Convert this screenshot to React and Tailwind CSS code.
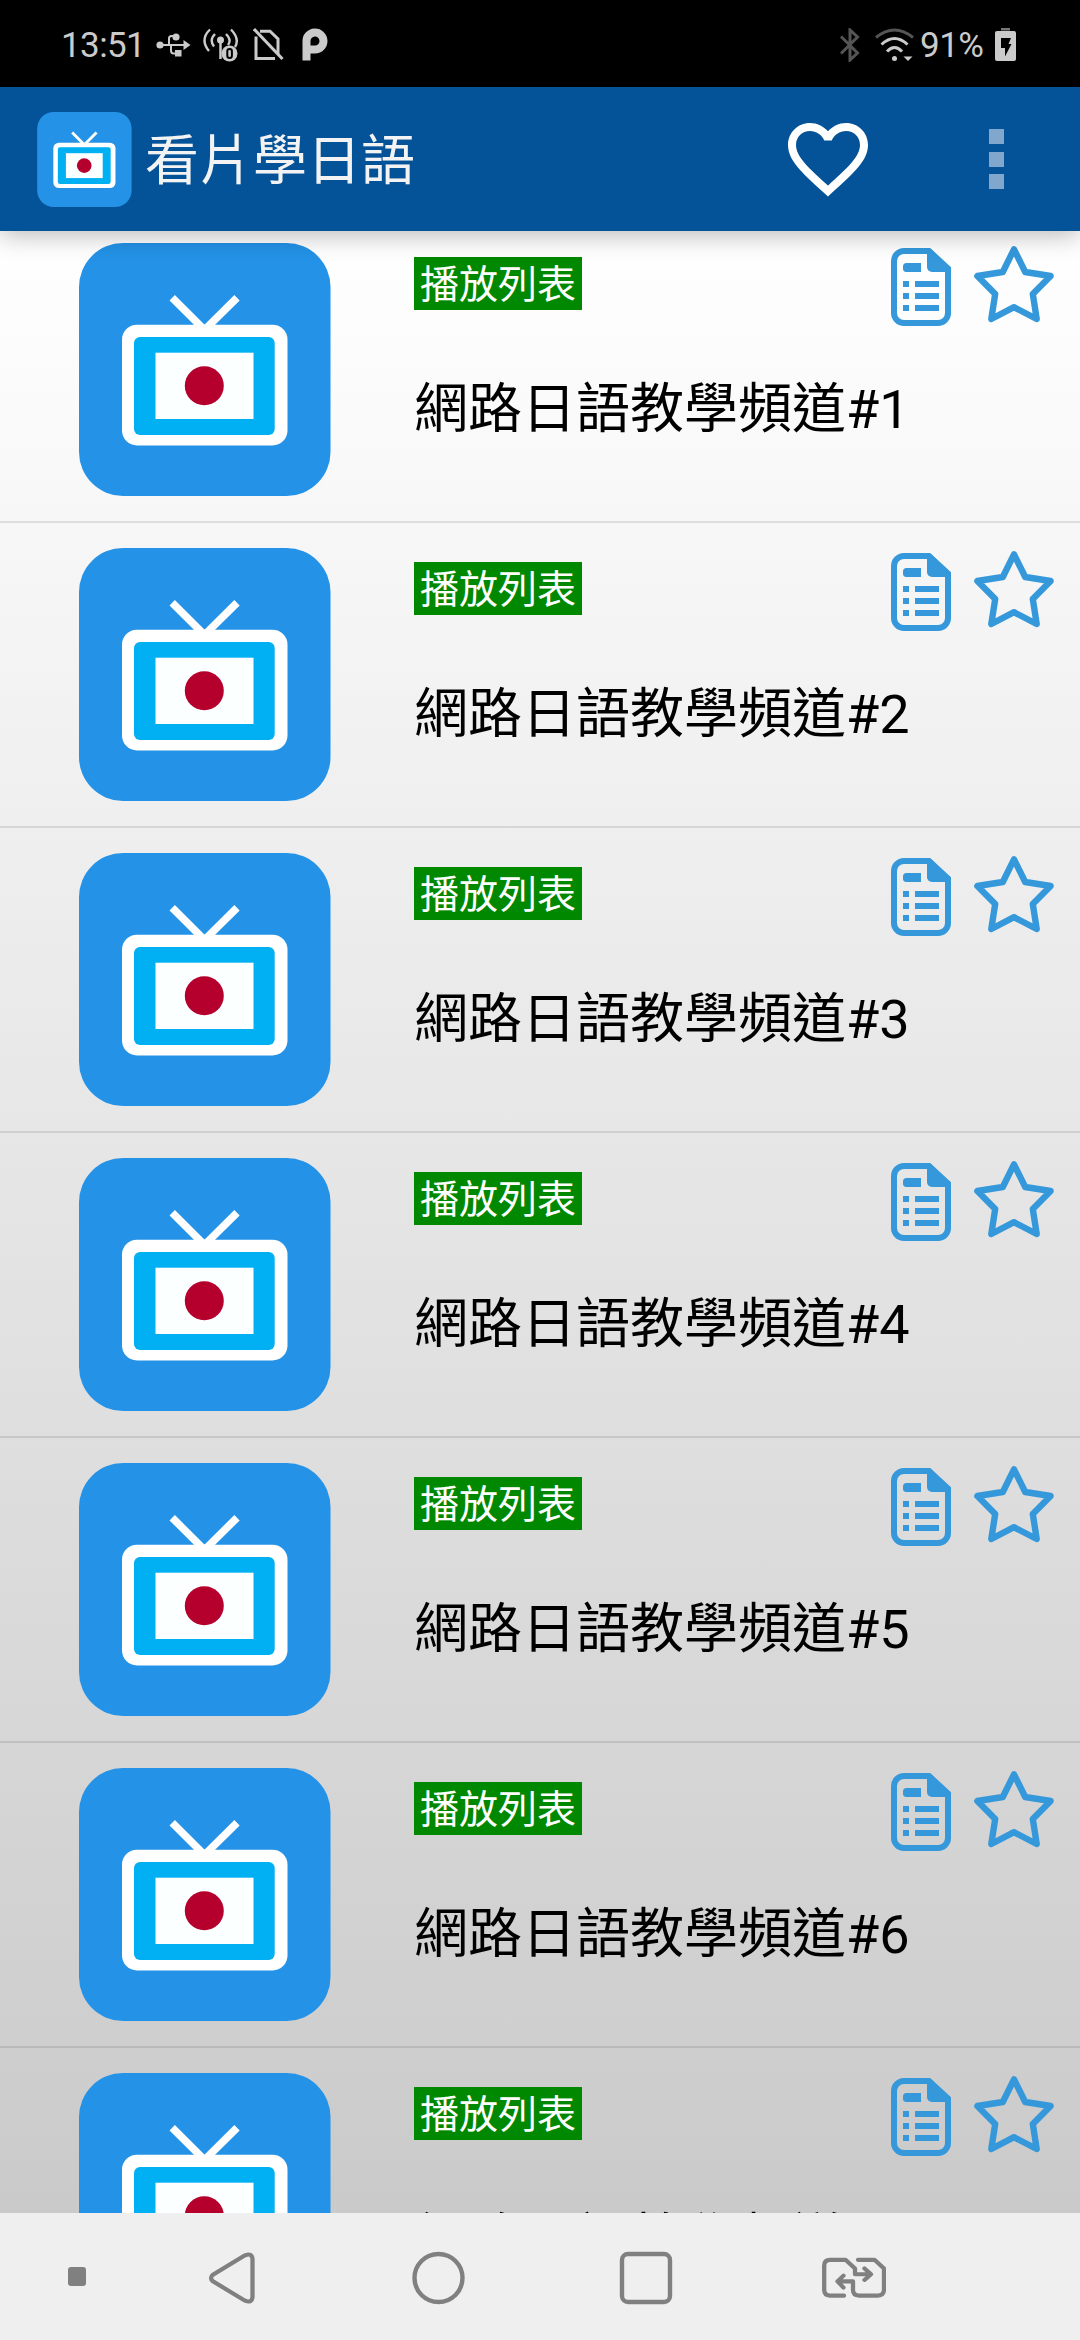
const channels = [1, 2, 3, 4, 5, 6, 7];

function TvLogo({ className }) {
  return (
    <svg viewBox="0 0 252 253" className={className} fill="none">
      <rect width="251.5" height="253" rx="44" fill="#2492e6" />
      <path d="M93.2 54.7 125.5 87 158 54.7" stroke="#fff" strokeWidth="7.6" />
      <rect x="43" y="81.7" width="165.5" height="120.8" rx="15" fill="#fff" />
      <rect x="55" y="94" width="140.7" height="98" rx="6" fill="#01b0f3" />
      <rect x="76.5" y="109.7" width="98" height="66.3" fill="#fbffff" />
      <circle cx="125.3" cy="142.7" r="19.5" fill="#b5002d" />
    </svg>
  );
}

function DocIcon() {
  return (
    <svg width="60" height="78" viewBox="0 0 60 78" fill="none">
      <path d="M38 3H13A10 10 0 0 0 3 13V65A10 10 0 0 0 13 75H47A10 10 0 0 0 57 65V20.500Z" stroke="#3498db" strokeWidth="6" />
      <path d="M36 1H40L59 19.500V24H41A5 5 0 0 1 36 19Z" fill="#3498db" />
      <path d="M15.500 15H30V24H15.500A3 3 0 0 1 12 21V18.500A3.500 3.500 0 0 1 15.500 15ZM12 33h6v6h-6zM24 33h24v6H24zM12 45h6v6h-6zM24 45h24v6H24zM12 57h6v6h-6zM24 57h24v6H24z" fill="#3498db" />
    </svg>
  );
}

function StarIcon() {
  return (
    <svg width="82" height="78" viewBox="0 0 82 78" fill="none">
      <path d="M41 4.300 52.200 27 77.600 31 59.800 49 63.700 74 41 62.200 18.300 74 22.200 49 4.400 31 29.800 27Z" stroke="#3498db" strokeWidth="6.400" strokeLinejoin="round" />
    </svg>
  );
}

function StatusBar() {
  return (
    <div className="flex h-[87px] shrink-0 items-center bg-black pl-[61px] pr-[64px] pt-[2px] text-[35px] leading-none text-[#cbcbcb]">
      <span className="w-[95px] pt-[2px] tracking-[-0.6px]">13:51</span>
      <svg width="35" height="34" viewBox="0 0 35 34" fill="none">
        <path d="M4 17H28M13 16V10.500Q13 8 15.500 8H19M15 18V22.500Q15 25.500 17.500 25.500H20" stroke="#cbcbcb" strokeWidth="2" />
        <circle cx="4" cy="17" r="3.600" fill="#cbcbcb" />
        <circle cx="20" cy="9" r="3.600" fill="#cbcbcb" />
        <path d="M27.500 12 34.500 17 27.500 22ZM19 22h6.500v6.500H19z" fill="#cbcbcb" />
      </svg>
      <svg className="ml-[12px]" width="35" height="34" viewBox="0 0 35 34" fill="none">
        <path d="M7 1.500Q-3.500 11.500 6 23M28 1.500Q37 11 32 19M12 6Q6 12 11 18.500M23 6Q29 12 25 17" stroke="#cbcbcb" strokeWidth="2.400" />
        <circle cx="17.500" cy="12" r="3.500" fill="#cbcbcb" />
        <path d="M17.500 13V31" stroke="#cbcbcb" strokeWidth="2.500" />
        <circle cx="26.500" cy="25.500" r="8" fill="#cbcbcb" />
        <rect x="24.300" y="21" width="4.600" height="9" rx="2.300" stroke="#000" strokeWidth="2" />
      </svg>
      <svg className="ml-[15px]" width="31" height="34" viewBox="0 0 31 34" fill="none">
        <path d="M7 3.200H17L25 11V26M3 8.500V30.500H22" stroke="#cbcbcb" strokeWidth="3" />
        <path d="M1 1 29.500 31" stroke="#cbcbcb" strokeWidth="3" />
      </svg>
      <svg className="ml-[18px]" width="26" height="34" viewBox="0 0 26 34" fill="none">
        <path d="M4.500 32.500V13.500A8.500 8.500 0 1 1 13 21.500H8.500" stroke="#cbcbcb" strokeWidth="8" />
      </svg>
      <svg className="ml-auto" width="20" height="34" viewBox="0 0 20 34" fill="none">
        <path d="M1 8.500 17.500 25 10 32V2L17.500 9 1 25.500" stroke="#555" strokeWidth="3" />
      </svg>
      <svg className="ml-[15px]" width="40" height="34" viewBox="0 0 40 34" fill="none">
        <path d="M1 9.500Q19.500 -5.500 38 9.500" stroke="#555" strokeWidth="3" />
        <path d="M6.500 16.500Q19.500 4.500 32.500 16.500M12 23.500Q19.500 15.500 27 23.500" stroke="#cbcbcb" strokeWidth="3" />
        <circle cx="19.500" cy="30.500" r="2.500" fill="#cbcbcb" />
        <path d="M28.500 28.500H37.500L33 33Z" fill="#cbcbcb" />
      </svg>
      <span className="ml-[5px] w-[75px] pt-[2px] tracking-[-0.5px]">91%</span>
      <svg width="21" height="34" viewBox="0 0 21 34">
        <path d="M6 0h9v2.500H6z" fill="#777" />
        <path d="M2 3H19a2 2 0 0 1 2 2V31a2 2 0 0 1-2 2H2a2 2 0 0 1-2-2V5a2 2 0 0 1 2-2Z" fill="#cbcbcb" />
        <path d="M6 10H16L13.500 16H16.500L10 28.500V20H6Z" fill="#000" />
      </svg>
    </div>
  );
}

function AppBar() {
  return (
    <header className="relative z-10 flex h-[144px] shrink-0 items-center bg-[#045398] pl-[37px] pr-[76px] shadow-[0_4px_24px_rgba(0,0,0,0.28)]">
      <TvLogo className="h-[95px] w-[95px]" />
      <h1 className="ml-[13px] whitespace-nowrap pt-[5px] text-[54px] leading-none text-[#f3f3f3]">看片學日語</h1>
      <svg className="ml-auto" width="96" height="96" viewBox="0 0 24 24" fill="#fff">
        <path d="M16.500 3c-1.740 0-3.410.81-4.500 2.090C10.910 3.810 9.240 3 7.500 3 4.420 3 2 5.420 2 8.500c0 3.780 3.400 6.860 8.550 11.540L12 21.350l1.450-1.320C18.600 15.360 22 12.280 22 8.500 22 5.420 19.580 3 16.500 3zm-4.400 15.550l-.1.1-.1-.1C7.140 14.240 4 11.390 4 8.500 4 6.500 5.500 5 7.500 5c1.540 0 3.040.99 3.570 2.360h1.870C13.460 5.990 14.960 5 16.500 5c2 0 3.500 1.500 3.500 3.500 0 2.890-3.140 5.740-7.900 10.050z" />
      </svg>
      <div className="ml-[113px] flex flex-col gap-[7.500px]">
        <span className="h-[15px] w-[15px] bg-[#82a7cc]" />
        <span className="h-[15px] w-[15px] bg-[#82a7cc]" />
        <span className="h-[15px] w-[15px] bg-[#82a7cc]" />
      </div>
    </header>
  );
}

function ChannelRow({ number }) {
  return (
    <li className="flex h-[305px] border-b-2 border-black/10 pl-[79px]">
      <TvLogo className="mt-[24.5px] h-[253px] w-[252px] shrink-0" />
      <div className="ml-[83px] flex flex-1 flex-col items-start">
        <div className="flex w-full pr-[25px]">
          <span className="mt-[39px] h-[53px] bg-[#008800] px-[6px] text-[39px] leading-[57px] text-white">播放列表</span>
          <div className="ml-auto mt-[27px] flex gap-[22px] pt-[3px]">
            <DocIcon />
            <div className="-mt-[3px]"><StarIcon /></div>
          </div>
        </div>
        <p className="mt-[52px] whitespace-nowrap text-[54px] leading-[64px] text-black">網路日語教學頻道#{number}</p>
      </div>
    </li>
  );
}

function NavBar() {
  return (
    <nav className="flex h-[127px] shrink-0 items-center bg-[#efefef] pl-[68px] pt-[2px]">
      <span className="-mt-[2px] h-[19px] w-[18px] rounded-[3px] bg-[#808080]" />
      <svg className="ml-[122px]" width="48" height="54" viewBox="0 0 48 56" preserveAspectRatio="none" fill="none" stroke="#808080" strokeWidth="4.300">
        <path d="M37 4.500 5 24.500Q1 28 5 31.500L37 51.500Q44 54.500 44.500 47.500V8.500Q44 1.500 37 4.500Z" />
      </svg>
      <svg className="ml-[156px]" width="53" height="54" viewBox="0 0 53 54" fill="none" stroke="#808080" strokeWidth="4.400">
        <circle cx="26.500" cy="27" r="24" />
      </svg>
      <svg className="ml-[154px]" width="54" height="54" viewBox="0 0 54 54" fill="none" stroke="#808080" strokeWidth="4.400">
        <rect x="3" y="3" width="48" height="48" rx="6" />
      </svg>
      <svg className="ml-[149px]" width="64" height="42" viewBox="0 0 64 44" preserveAspectRatio="none" fill="none" stroke="#808080" strokeWidth="4.300" strokeLinecap="round" strokeLinejoin="round">
        <path d="M22 40.500H8Q2.200 40 2.200 34.500V9Q2.200 3.200 8 3H23.500L33 12V18H48M42.500 12 49 18 42.500 24M36 3H52.500L62 12V34.500Q61.500 40.500 55.500 40.500H37Q31 40 31 34.500V25.500H15.500M21.500 19.500 15.500 25.500 21.500 32" />
      </svg>
    </nav>
  );
}

export default function App() {
  return (
    <div className="flex h-[2340px] w-[1080px] flex-col overflow-hidden font-['Roboto','Noto_Sans_CJK_TC',sans-serif]">
      <StatusBar />
      <AppBar />
      <main className="min-h-0 flex-1 overflow-hidden bg-gradient-to-b from-white to-[#cacaca]">
        <ul className="-mt-[13px]">
          {channels.map((number) => (
            <ChannelRow key={number} number={number} />
          ))}
        </ul>
      </main>
      <NavBar />
    </div>
  );
}
